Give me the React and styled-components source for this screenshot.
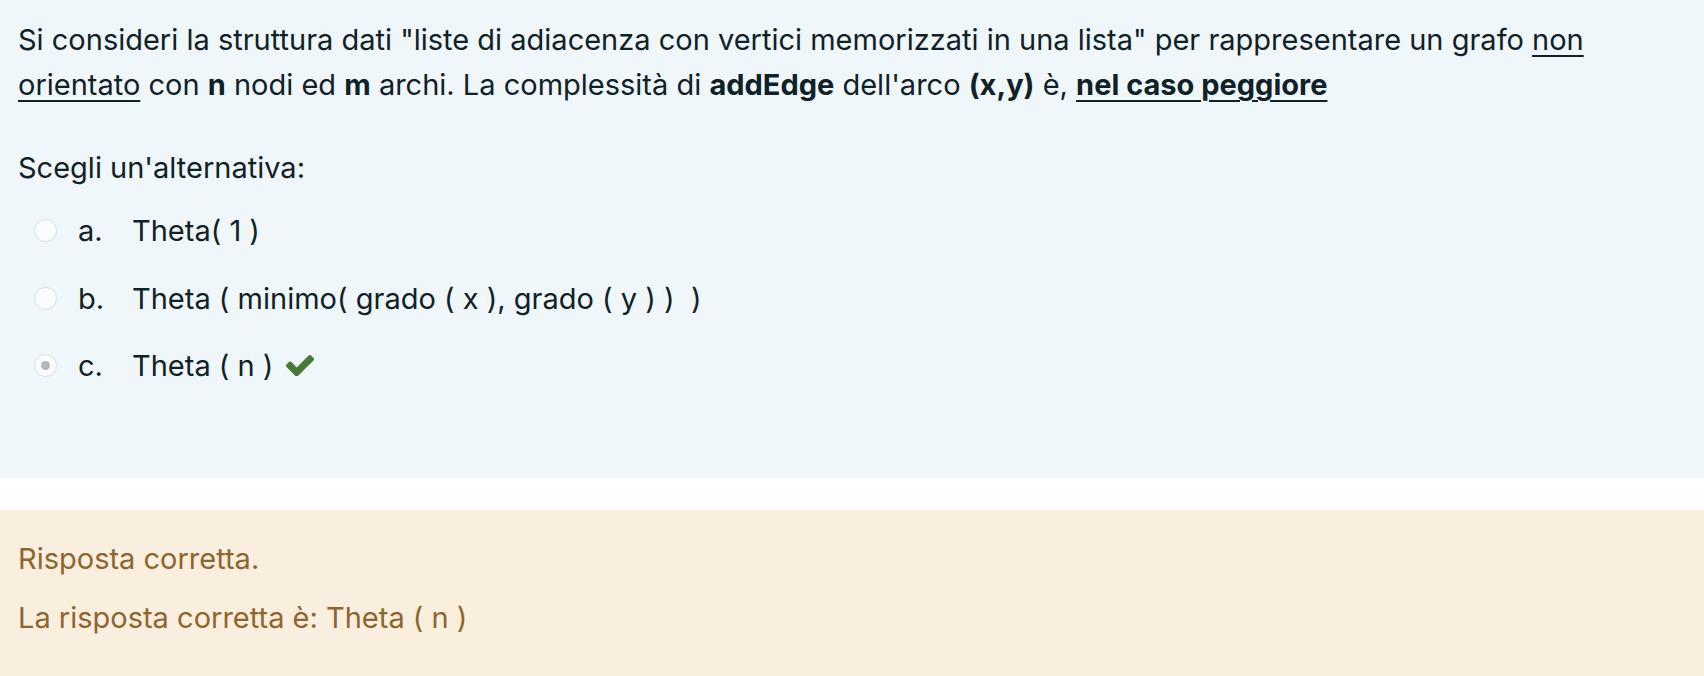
import React from "react";
import styled, { createGlobalStyle } from "styled-components";

const GlobalStyle = createGlobalStyle`
  html, body { margin: 0; padding: 0; background: #ffffff; }
  body { font-family: Inter, "Noto Sans", "Liberation Sans", sans-serif; }
`;

const Page = styled.div`
  display: flex;
  flex-direction: column;
  gap: 32px;
`;

const Formulation = styled.section`
  background: #f0f7fb;
  color: #0f2228;
  padding: 17px 100px 90px 18px;
  font-size: 29px;
  line-height: 45px;
`;

const QText = styled.p`
  margin: 0;
  u { text-decoration-thickness: 2px; text-underline-offset: 5px; }
  b { font-weight: 700; }
`;

const Prompt = styled.p`
  margin: 38px 0 0;
`;

const AnswerList = styled.div`
  display: flex;
  flex-direction: column;
  gap: 22.5px;
  margin-top: 18px;
`;

const Option = styled.label`
  display: flex;
  align-items: center;
  height: 45px;
`;

const Radio = styled.span`
  box-sizing: border-box;
  width: 23px;
  height: 23px;
  margin-left: 16px;
  margin-right: 21px;
  border-radius: 50%;
  border: 1.5px solid #d9dde1;
  background: #fbfcfd;
  display: flex;
  align-items: center;
  justify-content: center;
  &::after {
    content: "";
    width: 9px;
    height: 9px;
    border-radius: 50%;
    background: ${(p) => (p.$checked ? "#b4b6b8" : "transparent")};
  }
`;

const Letter = styled.span`
  width: 54px;
  flex: none;
`;

const AnswerText = styled.span`
  white-space: pre;
`;

const Check = styled.svg`
  width: 28px;
  height: 21.5px;
  margin-left: 13px;
  fill: #457a37;
`;

const Outcome = styled.section`
  background: #faeedf;
  color: #8d662e;
  padding: 26px 18px 36px;
  font-size: 29px;
  line-height: 45px;
  display: flex;
  flex-direction: column;
  gap: 14px;
`;

const OutcomeLine = styled.p`
  margin: 0;
`;

const answers = [
  { letter: "a.", text: "Theta( 1 )" },
  { letter: "b.", text: "Theta ( minimo( grado ( x ), grado ( y ) )  )" },
  { letter: "c.", text: "Theta ( n )", checked: true, correct: true },
];

export default function App() {
  return (
    <>
      <GlobalStyle />
      <Page>
        <Formulation>
          <QText>
            Si consideri la struttura dati "liste di adiacenza con vertici memorizzati in una lista" per
            rappresentare un grafo <u>non orientato</u> con <b>n</b> nodi ed <b>m</b> archi. La complessità
            di <b>addEdge</b> dell'arco <b>(x,y)</b> è, <b><u>nel caso peggiore</u></b>
          </QText>
          <Prompt>Scegli un'alternativa:</Prompt>
          <AnswerList>
            {answers.map((a) => (
              <Option key={a.letter}>
                <Radio $checked={a.checked} />
                <Letter>{a.letter}</Letter>
                <AnswerText>{a.text}</AnswerText>
                {a.correct && (
                  <Check viewBox="121 334 1550 1188" aria-hidden="true">
                    <path d="M1671 566q0 40-28 68l-724 724-136 136q-28 28-68 28t-68-28l-136-136-362-362q-28-28-28-68t28-68l136-136q28-28 68-28t68 28l294 295 656-657q28-28 68-28t68 28l136 136q28 28 28 68z" />
                  </Check>
                )}
              </Option>
            ))}
          </AnswerList>
        </Formulation>
        <Outcome>
          <OutcomeLine>Risposta corretta.</OutcomeLine>
          <OutcomeLine>La risposta corretta è: Theta ( n )</OutcomeLine>
        </Outcome>
      </Page>
    </>
  );
}
